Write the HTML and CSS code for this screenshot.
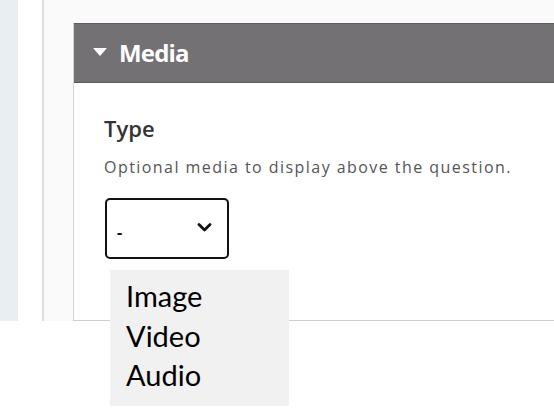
FILE: index.html
```html
<!DOCTYPE html>
<html>
<head>
<meta charset="utf-8">
<link rel="stylesheet" href="styles.css">
</head>
<body>
<div class="page">
  <div class="sidebar"></div>
  <div class="gutter"></div>
  <div class="main">
    <div class="panel">
      <div class="panel-header">
        <svg class="caret" width="14" height="8" viewBox="0 0 14 8"><path d="M0 0 H14 L7 8 Z" fill="#fff"/></svg>
        <span class="panel-title">Media</span>
      </div>
      <div class="panel-body">
        <div class="field-label">Type</div>
        <div class="field-desc">Optional media to display above the question.</div>
        <div class="select">
          <span class="select-value">-</span>
          <svg class="chevron" width="15" height="9" viewBox="0 0 15 9"><path d="M2 1.5 L7.5 7 L13 1.5" fill="none" stroke="#111" stroke-width="2.8" stroke-linecap="round" stroke-linejoin="round"/></svg>
        </div>
      </div>
    </div>
  </div>
</div>
<ul class="menu">
  <li>Image</li>
  <li>Video</li>
  <li>Audio</li>
</ul>
</body>
</html>
```
FILE: styles.css
```css
html, body {
  margin: 0;
  padding: 0;
  background: #ffffff;
}
.page {
  display: flex;
  height: 321px;
}
.sidebar {
  width: 18px;
  background: #e8eef1;
}
.gutter {
  width: 24px;
  background: #ffffff;
}
.main {
  flex: 1;
  background: #fafafa;
  border-left: 2px solid #dedede;
  padding: 23px 0 0 29px;
  display: flex;
}
.panel {
  flex: 1;
  display: flex;
  flex-direction: column;
  background: #ffffff;
  border-left: 1px solid #d4d4d4;
  border-bottom: 1px solid #cfcfcf;
}
.panel-header {
  height: 58px;
  background: #747174;
  border-top: 1px solid #5e5b5e;
  border-bottom: 1px solid #5e5b5e;
  display: flex;
  align-items: center;
  padding-left: 19px;
  font-family: "Open Sans", sans-serif;
}
.caret {
  margin-top: -2px;
  margin-right: 12px;
}
.panel-title {
  color: #ffffff;
  font-weight: 700;
  font-size: 24px;
  letter-spacing: -0.8px;
  line-height: 28px;
}
.panel-body {
  flex: 1;
  padding: 31px 30px 0 30px;
  font-family: "Open Sans", sans-serif;
}
.field-label {
  font-size: 22px;
  line-height: 28px;
  font-weight: 600;
  color: #333333;
}
.field-desc {
  margin-top: 14px;
  font-size: 16px;
  letter-spacing: 1.45px;
  line-height: 22px;
  color: #555555;
}
.select {
  margin-top: 20px;
  margin-left: 1px;
  border: 2px solid #111111;
  border-radius: 5px;
  display: flex;
  align-items: center;
  justify-content: space-between;
  padding: 0 15px 0 10px;
  box-sizing: border-box;
  width: 124px;
  height: 61px;
}
.select-value {
  font-size: 16px;
  font-weight: 700;
  color: #111111;
  margin-top: 6px;
}
.chevron {
  margin-top: -2px;
}
.menu {
  position: absolute;
  left: 110px;
  top: 270px;
  width: 179px;
  height: 136px;
  margin: 0;
  padding: 6px 0 0 16px;
  box-sizing: border-box;
  list-style: none;
  background: #f1f1f1;
  font-family: Lato, sans-serif;
  font-size: 29px;
  line-height: 39.5px;
  color: #000000;
}
```
